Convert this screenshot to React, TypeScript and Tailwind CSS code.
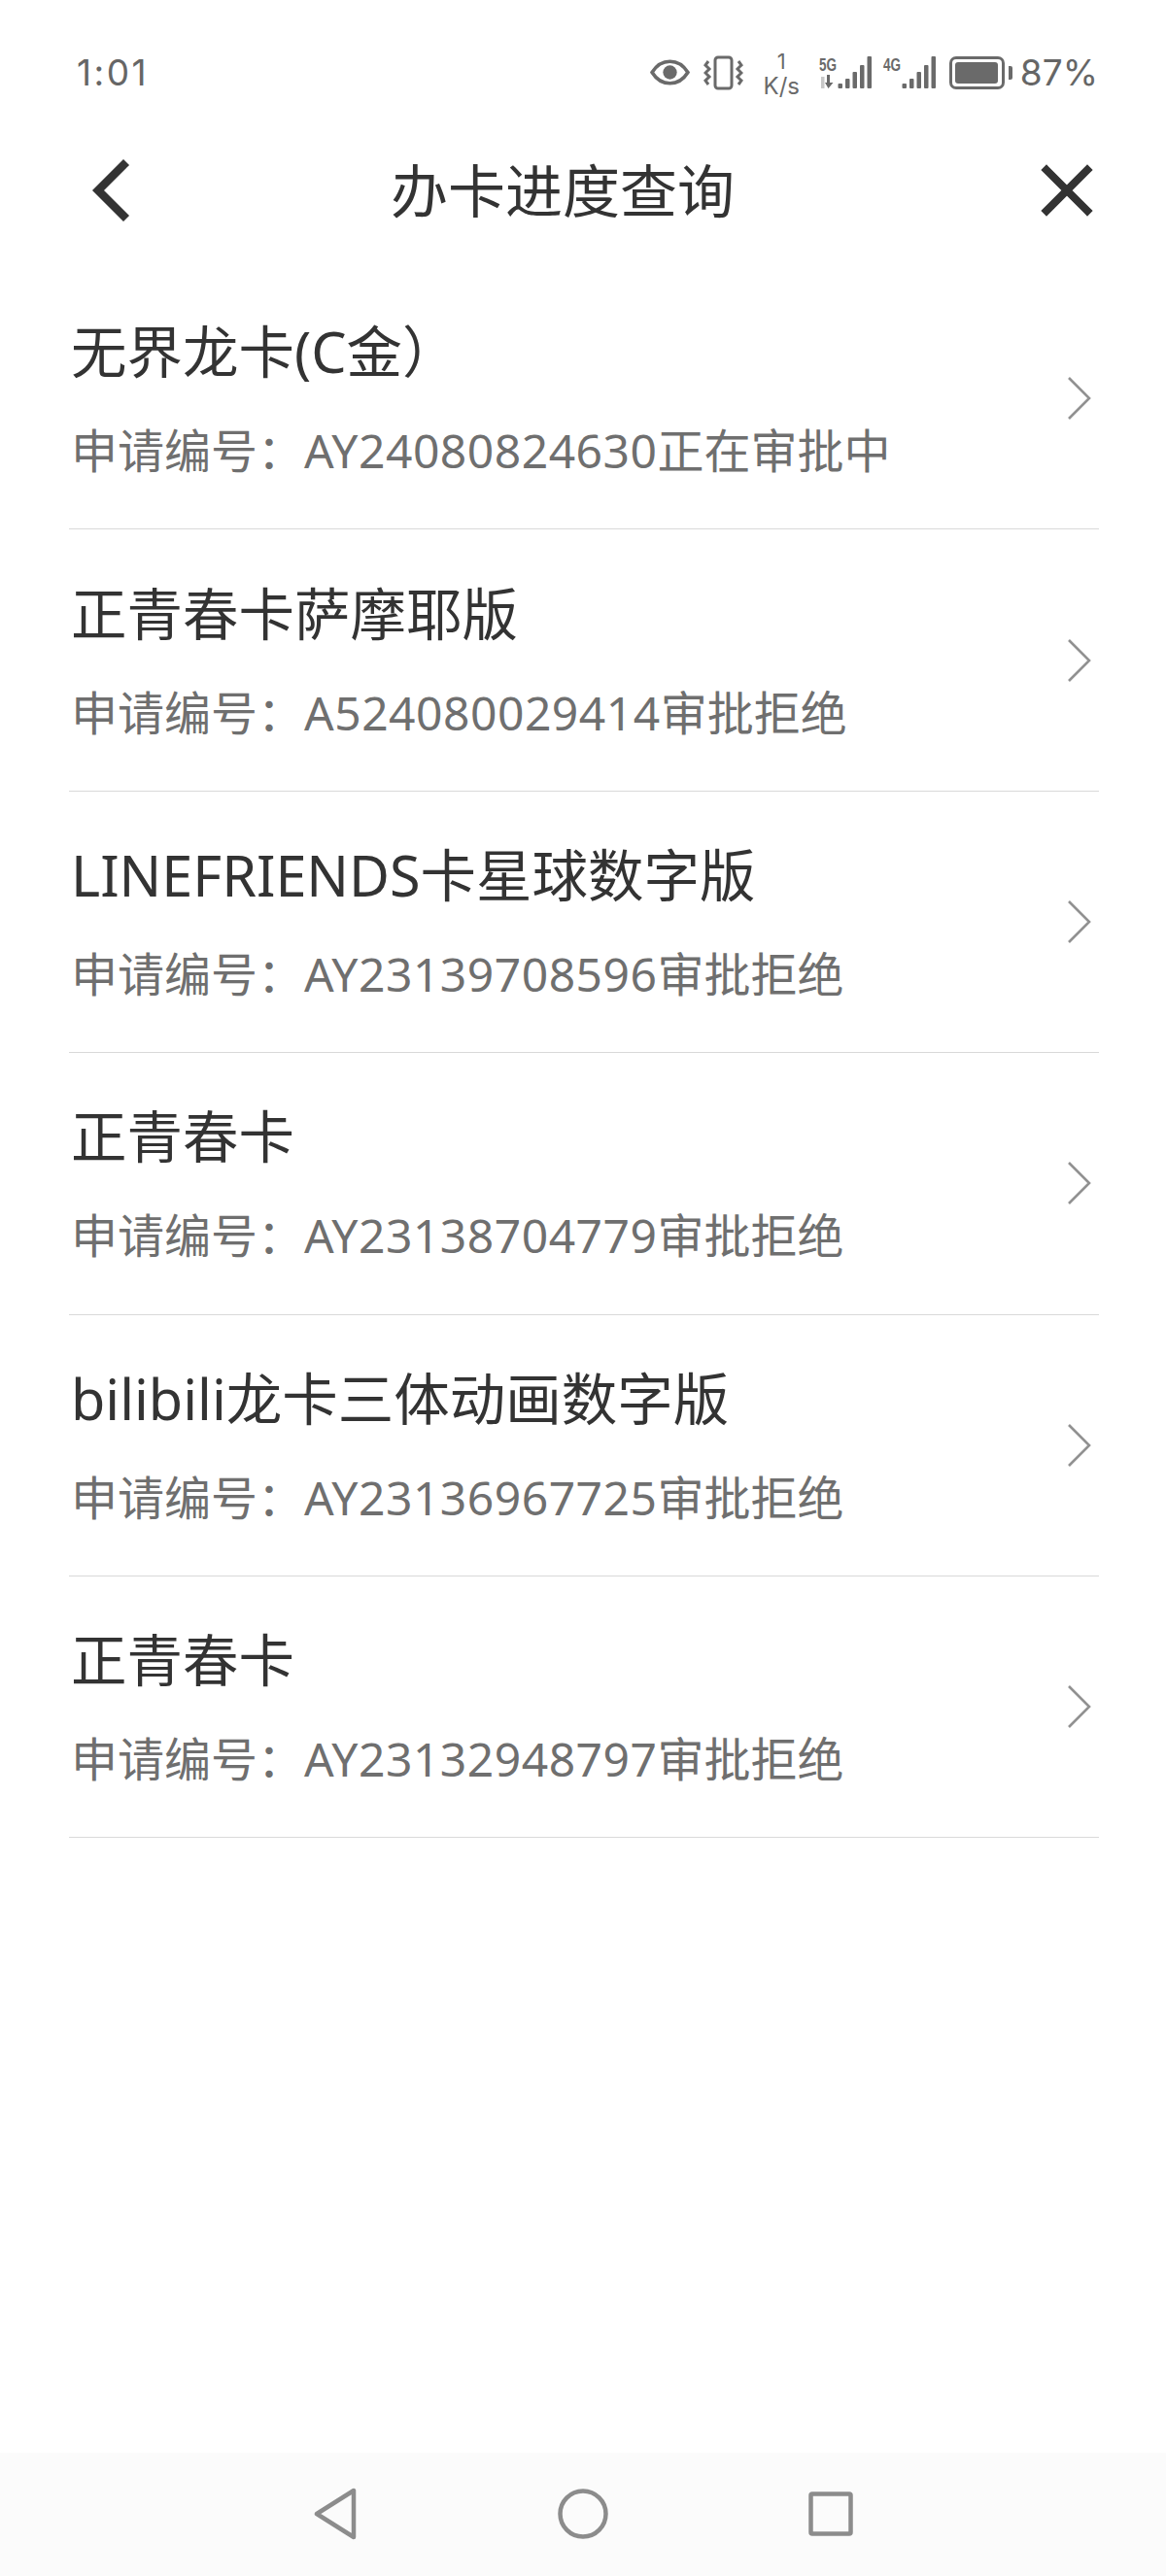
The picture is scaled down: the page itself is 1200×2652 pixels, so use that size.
const FONT = "font-['Noto_Sans','Noto_Sans_CJK_SC',sans-serif]";

const items = [
  { name: "无界龙卡(C金）", code: "AY24080824630", status: "正在审批中" },
  { name: "正青春卡萨摩耶版", code: "A524080029414", status: "审批拒绝" },
  { name: "LINEFRIENDS卡星球数字版", code: "AY23139708596", status: "审批拒绝" },
  { name: "正青春卡", code: "AY23138704779", status: "审批拒绝" },
  { name: "bilibili龙卡三体动画数字版", code: "AY23136967725", status: "审批拒绝" },
  { name: "正青春卡", code: "AY23132948797", status: "审批拒绝" },
];

function Signal({ label, extra }: { label: string; extra?: boolean }) {
  return (
    <svg width="56" height="36" viewBox="0 0 56 36" fill="#6a6a6a">
      <text
        x="1"
        y="16"
        fontSize="19"
        fontWeight="700"
        fontFamily="'Liberation Sans',sans-serif"
        textLength="18"
        lengthAdjust="spacingAndGlyphs"
      >
        {label}
      </text>
      {extra && (
        <>
          <path d="M3 22h3.5v12H3z" fill="#c8c8c8" />
          <path d="M9 20h3v8h3.5l-5 6L7 28h2z" />
        </>
      )}
      <rect x="20.5" y="29" width="4.5" height="5" rx="1" />
      <rect x="28" y="24" width="4.5" height="10" rx="1" />
      <rect x="35.5" y="17" width="4.5" height="17" rx="1" />
      <rect x="43" y="10" width="4.5" height="24" rx="1" />
      <rect x="50.5" y="1" width="4.5" height="33" rx="1" />
    </svg>
  );
}

function StatusBar() {
  return (
    <div className="flex h-[125px] items-center justify-between pl-[79px] pr-[70px] pt-[24px] font-['Inter',sans-serif] text-[#666666]">
      <span className="text-[37px] leading-none tracking-[2.5px]">1:01</span>
      <div className="flex items-center">
        <svg width="41" height="27" viewBox="0 0 40 26" fill="none">
          <path d="M2 13C7 5 13 2 20 2s13 3 18 11c-5 8-11 11-18 11S7 21 2 13z" stroke="#6a6a6a" strokeWidth="3.5" />
          <circle cx="20" cy="13" r="7" fill="#6a6a6a" />
        </svg>
        <svg className="ml-[14px]" width="41" height="36" viewBox="0 0 41 36" fill="none" stroke="#6a6a6a">
          <rect x="12" y="2" width="17" height="32" rx="3" strokeWidth="3" />
          <path d="M5 6l-3 4 4 4-4 4 4 4-4 4 3 4M36 6l3 4-4 4 4 4-4 4 4 4-3 4" strokeWidth="3" />
        </svg>
        <div className="ml-[20px] flex w-[39px] flex-col items-center pt-[2px] text-[#6a6a6a]">
          <span className="text-[22px] leading-[26px]">1</span>
          <span className="text-[24px] leading-[26px]">K/s</span>
        </div>
        <div className="ml-[18px] flex items-center gap-[10px]">
          <Signal label="5G" extra />
          <Signal label="4G" />
        </div>
        <div className="ml-[13px] flex items-center">
          <div className="h-[34px] w-[57px] rounded-[7px] border-[3px] border-[#6a6a6a] p-[3px]">
            <div className="h-full w-[44px] rounded-[3px] bg-[#6a6a6a]" />
          </div>
          <div className="ml-[4px] h-[14px] w-[4px] rounded-r-[2px] bg-[#6a6a6a]" />
        </div>
        <span className="ml-[8px] text-[37px] leading-none">87%</span>
      </div>
    </div>
  );
}

function Header() {
  return (
    <div className="flex h-[144px] items-center pb-[2px] pl-[92px] pr-[74px]">
      <svg width="44" height="64" viewBox="0 0 44 64" fill="none" stroke="#333333" strokeWidth="8.5" strokeLinecap="square">
        <path d="M35 6L9 32l26 26" />
      </svg>
      <h1 className="ml-[266px] text-[59px] leading-none text-[#333333]">办卡进度查询</h1>
      <svg className="ml-auto" width="56" height="56" viewBox="0 0 56 56" fill="none" stroke="#333333" strokeWidth="8" strokeLinecap="square">
        <path d="M7 7l42 42M49 7L7 49" />
      </svg>
    </div>
  );
}

function Row({ name, code, status }: (typeof items)[number]) {
  return (
    <div className="flex h-[269.4px] items-center justify-between border-b-[1px] border-[#d9d9d9]">
      <div className="flex flex-col gap-[42px] pl-[2px] pt-[6px]">
        <div className="text-[57.5px] leading-[60px] text-[#333333]">{name}</div>
        <div className="text-[48px] leading-[60px] text-[#6f6f6f]">
          申请编号：<span className="tracking-[0.5px]">{code}</span>
          {status}
        </div>
      </div>
      <svg className="mr-[7px]" width="26" height="46" viewBox="0 0 26 46" fill="none" stroke="#919191" strokeWidth="2.6">
        <path d="M2 2l21 21L2 44" />
      </svg>
    </div>
  );
}

function BottomNav() {
  return (
    <div className="flex h-[127px] items-center justify-center gap-[206px] bg-[#fbfbfb] pb-[2px]">
      <svg width="45" height="54" viewBox="0 0 45 54" fill="none" stroke="#8c8c8c" strokeWidth="4.5" strokeLinejoin="round">
        <path d="M41 3v48L3 27z" />
      </svg>
      <svg width="52" height="52" viewBox="0 0 52 52" fill="none" stroke="#8c8c8c" strokeWidth="4.5">
        <circle cx="26" cy="26" r="23.5" />
      </svg>
      <svg width="46" height="46" viewBox="0 0 46 46" fill="none" stroke="#8c8c8c" strokeWidth="4.5" strokeLinejoin="round">
        <rect x="2.5" y="2.5" width="41" height="41" rx="1.5" />
      </svg>
    </div>
  );
}

export default function App() {
  return (
    <div className={`flex h-[2652px] w-[1200px] flex-col bg-white ${FONT}`}>
      <StatusBar />
      <Header />
      <div className="mt-[7px] flex-1 pl-[71px] pr-[69px]">
        {items.map((item) => (
          <Row key={item.code} {...item} />
        ))}
      </div>
      <BottomNav />
    </div>
  );
}
